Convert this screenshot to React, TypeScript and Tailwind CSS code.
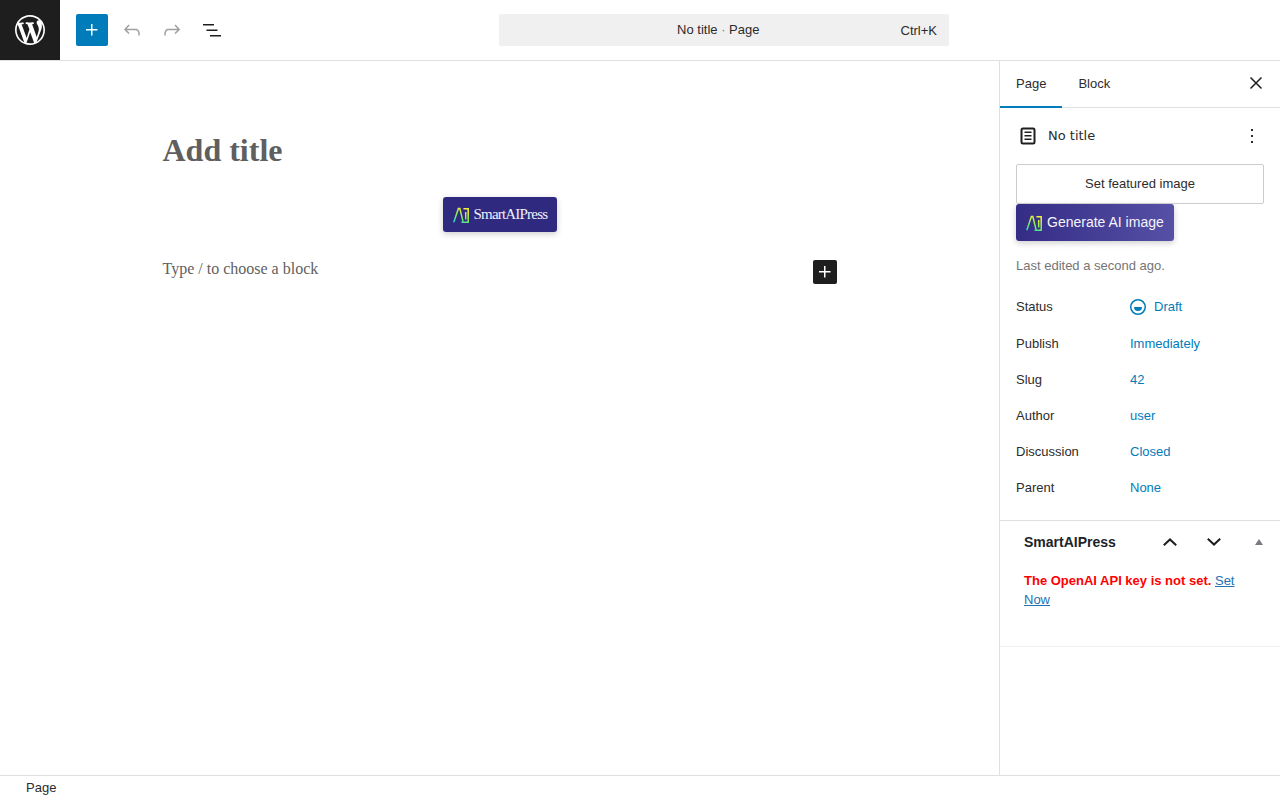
import React from "react";

const WP_LOGO =
  "M20 10c0-5.51-4.49-10-10-10C4.48 0 0 4.49 0 10c0 5.52 4.48 10 10 10 5.51 0 10-4.48 10-10zM7.78 15.37L4.37 6.22c.55-.02 1.17-.08 1.17-.08.5-.06.44-1.13-.06-1.11 0 0-1.45.11-2.37.11-.18 0-.37 0-.58-.01C4.12 2.69 6.87 1.11 10 1.11c2.33 0 4.45.87 6.05 2.34-.68-.11-1.65.39-1.65 1.58 0 .74.45 1.36.9 2.1.35.61.55 1.36.55 2.46 0 1.49-1.4 5-1.4 5l-3.03-8.37c.54-.02.82-.17.82-.17.5-.05.44-1.25-.06-1.22 0 0-1.44.12-2.38.12-.87 0-2.33-.12-2.33-.12-.5-.03-.56 1.2-.06 1.22l.92.08 1.26 3.41zM17.41 10c.24-.64.74-1.87.43-4.25.7 1.29 1.05 2.71 1.05 4.25 0 3.29-1.73 6.24-4.4 7.78.97-2.59 1.94-5.2 2.92-7.78zM6.1 18.09C3.12 16.65 1.11 13.53 1.11 10c0-1.3.23-2.48.72-3.59C3.25 10.3 4.67 14.2 6.1 18.09zm4.03-6.63l2.58 6.98c-.86.29-1.76.45-2.71.45-.79 0-1.57-.11-2.29-.33.81-2.38 1.62-4.74 2.42-7.1z";
const PLUS = "M11 12.5V17.5H12.5V12.5H17.5V11H12.5V6H11V11H6V12.5H11Z";

function Icon({ d, className = "" }: { d: string; className?: string }) {
  return (
    <svg viewBox="0 0 24 24" width="24" height="24" fill="currentColor" className={className}>
      <path d={d} />
    </svg>
  );
}

// SmartAIPress mark
function SmartMark({ id, className = "" }: { id: string; className?: string }) {
  return (
    <svg viewBox="0 0 16 16" fill="none" className={className}>
      <defs>
        <linearGradient id={id} gradientUnits="userSpaceOnUse" x1="1" y1="16" x2="8" y2="1">
          <stop offset="0" stopColor="#22d3d8" />
          <stop offset="0.5" stopColor="#7df05a" />
          <stop offset="1" stopColor="#f2f03a" />
        </linearGradient>
      </defs>
      <path
        d="M0.8 15.2L5.4 1.4H6.8L10 14.4M10.4 1.8H15.2V15.2H8.5M12.7 5V12.4"
        stroke={`url(#${id})`}
        strokeWidth="1.5"
      />
    </svg>
  );
}

function MetaRow({ label, value }: { label: string; value: string }) {
  return (
    <div className="flex h-9 items-center">
      <div className="w-[114px]">{label}</div>
      <a className="text-[#007cba]">{value}</a>
    </div>
  );
}

export default function App() {
  return (
    <div className="flex h-screen flex-col overflow-hidden bg-white font-['Liberation_Sans',sans-serif] text-[13px] text-[#2c2c2c]">
      {/* Top bar */}
      <header className="flex h-[61px] shrink-0 border-b border-[#e0e0e0]">
        <div className="flex h-[60px] w-[60px] items-center justify-center bg-[#1e1e1e]">
          <svg viewBox="0 0 20 20" width="30" height="30" fill="#fff">
            <path d={WP_LOGO} />
          </svg>
        </div>
        <div className="flex w-[439px] items-center pl-4 text-[#1e1e1e]">
          <button className="flex h-8 w-8 items-center justify-center rounded-[2px] bg-[#007cba] text-white">
            <Icon d={PLUS} />
          </button>
          <button className="ml-2 flex h-8 w-8 items-center justify-center text-[#a0a0a0]">
            <Icon d="M18.3 11.7c-.6-.6-1.4-.9-2.3-.9H6.7l2.9-3.3-1.1-1-4.5 5L8.5 16l1-1-2.7-2.7H16c.5 0 .9.2 1.3.5 1 1 1 3.4 1 4.5v.3h1.5v-.2c0-1.5 0-4.3-1.5-5.7z" />
          </button>
          <button className="ml-2 flex h-8 w-8 items-center justify-center text-[#a0a0a0]">
            <Icon d="M15.6 6.5l-1.1 1 2.9 3.3H8c-.9 0-1.7.3-2.3.9-1.4 1.5-1.4 4.2-1.4 5.6v.2h1.5v-.3c0-1.1 0-3.5 1-4.5.3-.3.7-.5 1.3-.5h9.2L14.5 15l1.1 1.1 4.6-4.6-4.6-5z" />
          </button>
          <button className="ml-2 flex h-8 w-8 items-center justify-center">
            <Icon d="M3 6h11v1.5H3V6zm3.5 5.5h11V13h-11v-1.5zM21 17H10v1.5h11V17z" />
          </button>
        </div>
        <div className="mt-[14px] flex h-8 w-[450px] items-center rounded-[2px] bg-[#f0f0f0] pl-[37px] pr-3 pt-px">
          <div className="flex-1 -translate-y-px text-center">
            No title<span className="text-[#757575]"> · </span>Page
          </div>
          <div>Ctrl+K</div>
        </div>
      </header>

      <div className="flex min-h-0 flex-1">
        {/* Editor canvas */}
        <main className="min-w-0 flex-1">
          <div className="mx-auto w-[674px] pt-[70px] font-['Liberation_Serif',serif]">
            <h1 className="text-[32px] font-bold leading-[38px] text-[#5f5f5f]">Add title</h1>
            <div className="mt-7 flex justify-center">
              <button className="flex h-[35px] w-[114px] items-center gap-[5px] rounded-[3px] bg-[#2f2a7f] pl-[10px] text-[15px] tracking-[-0.8px] text-[#f0f0f8] shadow-[0_2px_6px_rgba(0,0,0,0.2)]">
                <SmartMark id="mark-a" className="h-4 w-4 shrink-0" />
                SmartAIPress
              </button>
            </div>
            <div className="mt-7 flex items-start justify-between">
              <p className="-translate-y-px text-[16px] leading-[19px] text-[#5f5f5f]">Type / to choose a block</p>
              <button className="flex h-6 w-6 items-center justify-center rounded-[2px] bg-[#1e1e1e] text-white">
                <Icon d={PLUS} />
              </button>
            </div>
          </div>
        </main>

        {/* Settings sidebar */}
        <aside className="w-[281px] shrink-0 border-l border-[#e0e0e0]">
          <div className="flex h-[47px] items-stretch border-b border-[#e0e0e0]">
            <div className="-mb-px flex items-center border-b-2 border-[#007cba] px-4">Page</div>
            <div className="flex items-center px-4">Block</div>
            <button className="ml-auto mr-3 flex items-center text-[#1e1e1e]">
              <svg viewBox="0 0 24 24" width="24" height="24" fill="none" stroke="currentColor" strokeWidth="1.5" className="-mt-0.5">
                <path d="M6.5 6.5l11 11M17.5 6.5l-11 11" />
              </svg>
            </button>
          </div>

          <div className="px-4">
            <div className="flex h-[56px] items-center">
              <svg viewBox="0 0 24 24" width="24" height="24" fill="none" stroke="#1e1e1e" className="mr-2">
                <rect x="5.5" y="4.5" width="13" height="15" rx="1.5" strokeWidth="2" />
                <path d="M8.5 8.25h7M8.5 11.75h7M8.5 15.25h7" strokeWidth="1.5" />
              </svg>
              <span className="font-['DejaVu_Sans',sans-serif]">No title</span>
              <Icon d="M13 19h-2v-2h2v2zm0-6h-2v-2h2v2zm0-6h-2V5h2v2z" className="ml-auto" />
            </div>
            <button className="h-10 w-full rounded-[2px] border border-[#ccc]">Set featured image</button>
            <button className="flex h-[37px] w-[158px] items-center gap-[5px] rounded-[3px] bg-linear-to-r from-[#352c85] to-[#5650a6] pl-[10px] text-[14px] text-[#f4f4fb] shadow-[0_2px_6px_rgba(0,0,0,0.2)]">
              <SmartMark id="mark-b" className="h-4 w-4 shrink-0" />
              Generate AI image
            </button>
            <p className="mt-[15px] text-[#757575]">Last edited a second ago.</p>

            <div className="mt-[13px]">
              <div className="flex h-[37px] items-center pb-px">
                <div className="w-[110px]">Status</div>
                <svg viewBox="0 0 24 24" width="24" height="24" fill="#007cba">
                  <path fillRule="evenodd" clipRule="evenodd" d="M12 18.5a6.5 6.5 0 1 1 0-13 6.5 6.5 0 0 1 0 13ZM4 12a8 8 0 1 1 16 0 8 8 0 0 1-16 0Zm8 4a4 4 0 0 0 4-4H8a4 4 0 0 0 4 4Z" />
                </svg>
                <a className="ml-1 text-[#007cba]">Draft</a>
              </div>
              <MetaRow label="Publish" value="Immediately" />
              <MetaRow label="Slug" value="42" />
              <MetaRow label="Author" value="user" />
              <MetaRow label="Discussion" value="Closed" />
              <MetaRow label="Parent" value="None" />
            </div>
          </div>

          {/* SmartAIPress meta box */}
          <div className="mt-[14px] h-[127px] border-y border-t-[#e0e0e0] border-b-[#f0f0f0]">
            <div className="flex h-[43px] items-center pl-6 pr-[17px]">
              <h2 className="text-[14px] font-bold text-[#1d2327]">SmartAIPress</h2>
              <svg viewBox="0 0 14 8" width="14" height="8" fill="none" stroke="#1e1e1e" strokeWidth="2" className="ml-auto mr-[30px]">
                <path d="M0.8 7.2L7 1.4l6.2 5.8" />
              </svg>
              <svg viewBox="0 0 14 8" width="14" height="8" fill="none" stroke="#1e1e1e" strokeWidth="2" className="mr-[34px]">
                <path d="M0.8 0.8L7 6.6l6.2-5.8" />
              </svg>
              <div className="h-0 w-0 border-x-4 border-b-[6px] border-x-transparent border-b-[#787c82]" />
            </div>
            <p className="mt-[7px] px-6 leading-[19px]">
              <strong className="text-[#ff0000]">The OpenAI API key is not set.</strong>{" "}
              <a className="text-[#2271b1] underline">Set Now</a>
            </p>
          </div>
        </aside>
      </div>

      {/* Breadcrumb footer */}
      <footer className="flex h-[25px] shrink-0 items-center border-t border-[#e0e0e0] pl-[26px]">Page</footer>
    </div>
  );
}
